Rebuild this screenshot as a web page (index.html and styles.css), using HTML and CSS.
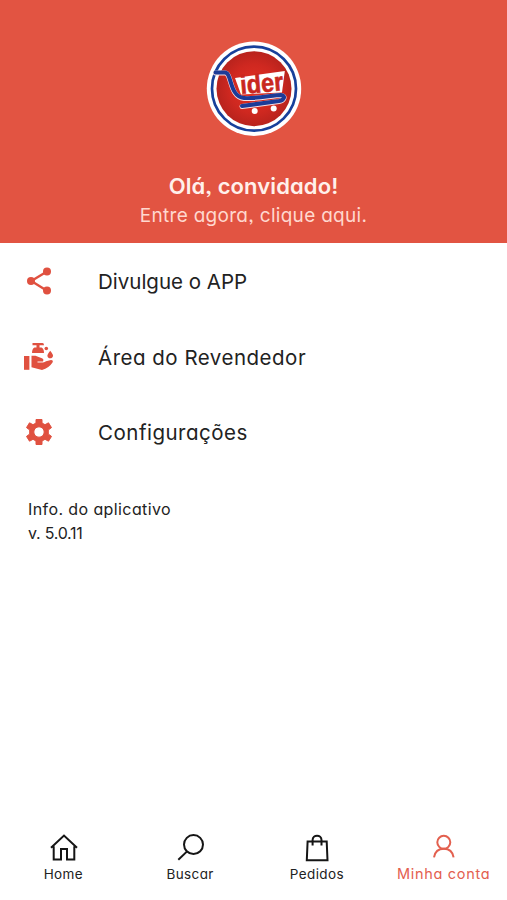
FILE: index.html
```html
<!DOCTYPE html>
<html lang="pt-BR">
<head>
  <meta charset="UTF-8">
  <meta name="viewport" content="width=device-width, initial-scale=1.0">
  <title>Minha conta</title>
  <link rel="stylesheet" href="styles.css">
</head>
<body>
  <header class="header">
    <svg class="logo" viewBox="0 0 96 96" role="img" aria-label="Lider">
      <defs>
        <radialGradient id="fundo">
          <stop offset="0" stop-color="#e33325"/>
          <stop offset="0.65" stop-color="#cf2820"/>
          <stop offset="1" stop-color="#b8231d"/>
        </radialGradient>
      </defs>
      <circle cx="48" cy="47.7" r="47.2" fill="#fff"/>
      <circle cx="48" cy="47.7" r="42" fill="#fff" stroke="#17409b" stroke-width="2.7"/>
      <circle cx="48" cy="47.7" r="37.5" fill="url(#fundo)"/>
      <path d="M29 37 L78.8 30 L76 51.5 L35 53.5 Z" fill="#fff"/>
      <text class="logo-text" x="35" y="53" textLength="43" lengthAdjust="spacingAndGlyphs" transform="rotate(-5 35 53)">ider</text>
      <g fill="none" stroke-linecap="round" stroke-linejoin="round">
        <path d="M9.5 32 H19 C26 32 23 56 38 57.5 C48 58.5 68 54.5 75 54.5 C80 55 78.5 59.5 73 60.5 L36 65.5" stroke="#f5dfe4" stroke-width="5"/>
        <path d="M9.5 31.5 H19 C26 31.5 23 55.5 38 57 C48 58 68 54 75 54 C80 54.5 78.5 59 73 60 L36 65" stroke="#1c3b98" stroke-width="4"/>
      </g>
      <circle cx="48.7" cy="70" r="3" fill="#fff"/>
      <circle cx="67.7" cy="67.5" r="3" fill="#fff"/>
    </svg>
    <h1 class="greeting">Olá, convidado!</h1>
    <a class="login" href="#">Entre agora, clique aqui.</a>
  </header>

  <main>
    <ul class="menu">
      <li>
        <svg class="menu-icon" viewBox="0 0 30 30">
          <path d="M23 5.5 L7.3 15 L23 24.7" fill="none" stroke="#e05140" stroke-width="2.4"/>
          <circle cx="23" cy="5.6" r="4" fill="#e05140"/>
          <circle cx="7" cy="15" r="4" fill="#e05140"/>
          <circle cx="23" cy="24.5" r="4" fill="#e05140"/>
        </svg>
        <span class="share">Divulgue o APP</span>
      </li>
      <li>
        <svg class="menu-icon" viewBox="0 0 30 30" fill="#e05140">
          <path d="M0 15 H5.4 V28.8 H0 Z"/>
          <path d="M7.5 14.7 H11.5 L18.5 17.5 Q20.2 18.5 19 20.5 H13.5 V21.5 H19 Q21 21.2 22 20.2 L27 19 Q29.7 19.3 28.5 21.5 Q25 27 18 29 L7.5 26.3 Z"/>
          <path d="M8.5 2 H18.5 Q20 2 20 4.3 H15.5 V6.5 H17.5 Q20 7.5 20 12 H8 Q8 7.5 10.5 6.5 H12.5 V4.3 H8.5 Z"/>
          <circle cx="22.3" cy="7.5" r="1.8"/>
          <path d="M26.2 9.8 Q29.3 13.5 29 14.9 C28.5 18.1 23.9 18.1 23.4 14.9 Q23.2 13.5 26.2 9.8 Z"/>
        </svg>
        <span class="reseller">Área do Revendedor</span>
      </li>
      <li>
        <svg class="menu-icon" viewBox="0 0 30 30">
          <path fill="#e05140" stroke="#e05140" stroke-linejoin="round" fill-rule="evenodd" d="M12 2.5 H18 V6 L21 7.7 L24.5 5.8 L27.5 10.6 L24.3 13 V17 L27.5 19.4 L24.5 24.2 L21 22.3 L18 24 V27.5 H12 V24 L9 22.3 L5.5 24.2 L2.5 19.4 L5.7 17 V13 L2.5 10.6 L5.5 5.8 L9 7.7 L12 6 Z M15 9.8 A5.2 5.2 0 1 0 15 20.2 A5.2 5.2 0 1 0 15 9.8 Z"/>
        </svg>
        <span class="settings">Configurações</span>
      </li>
    </ul>

    <div class="info">
      <p class="info-title">Info. do aplicativo</p>
      <p class="version">v. 5.0.11</p>
    </div>
  </main>

  <nav class="tabs">
    <a href="#">
      <svg viewBox="0 0 30 30">
        <path d="M3 15.8 L16 3.6 L29 15.8 M5.7 14.3 V27.5 H13 V17 H19 V27.5 H26.3 V14.3"/>
      </svg>
      <span class="tab-home">Home</span>
    </a>
    <a href="#">
      <svg viewBox="0 0 30 30">
        <circle cx="18.5" cy="12.6" r="9.5"/>
        <path d="M11.8 19.6 L3.3 27.8"/>
      </svg>
      <span class="tab-search">Buscar</span>
    </a>
    <a href="#">
      <svg viewBox="0 0 30 30">
        <path d="M5.6 9.4 H24.7 L25.5 28.3 H4.8 Z M10.6 13.6 V8 C10.6 2.2 19.5 2.2 19.5 8 V13.6"/>
      </svg>
      <span class="tab-orders">Pedidos</span>
    </a>
    <a href="#" class="active">
      <svg viewBox="0 0 30 30">
        <circle cx="14.8" cy="10.3" r="6.5"/>
        <path d="M5 25.3 C6 19.5 9.8 16.8 14.8 16.8 C19.8 16.8 23.6 19.5 24.6 25.3"/>
      </svg>
      <span class="tab-account">Minha conta</span>
    </a>
  </nav>
</body>
</html>
```
FILE: styles.css
```css
* {
  box-sizing: border-box;
}

body {
  margin: 0;
  height: 900px;
  display: flex;
  flex-direction: column;
  background: #fff;
  color: #222;
  font-family: Inter, "Open Sans", sans-serif;
  font-feature-settings: "cv11", "ss03";
}

a {
  color: inherit;
  text-decoration: none;
}

.header {
  height: 243px;
  padding-top: 41px;
  display: flex;
  flex-direction: column;
  align-items: center;
  background: #e25442;
  color: #fff0eb;
}

.logo {
  width: 96px;
  height: 96px;
}

.logo-text {
  font-family: "Liberation Sans", sans-serif;
  font-size: 26px;
  font-weight: bold;
  fill: #c9281f;
  stroke: #c9281f;
  stroke-width: 0.6;
}

.greeting {
  margin: 35px 0 0;
  font-size: 22px;
  line-height: 28px;
  font-weight: 600;
  letter-spacing: 0.1px;
}

.login {
  font-size: 19px;
  line-height: 32px;
  letter-spacing: 0.3px;
  color: #ffd8cf;
}

.menu {
  list-style: none;
  margin: 0;
  padding: 0 24px;
}

.menu li {
  height: 75.5px;
  display: flex;
  align-items: center;
  gap: 44px;
  font-size: 20.5px;
}

.menu-icon {
  width: 30px;
  height: 30px;
}

.menu span {
  padding-top: 2px;
}

.reseller,
.settings {
  letter-spacing: 0.5px;
}

.info {
  padding: 27px 28px;
  font-size: 16px;
  line-height: 24px;
}

.info p {
  margin: 0;
}

.info-title {
  letter-spacing: 0.4px;
}

.version {
  letter-spacing: -0.25px;
}

.tabs {
  margin-top: auto;
  height: 70px;
  display: grid;
  grid-template-columns: repeat(4, 1fr);
}

.tabs a {
  display: flex;
  flex-direction: column;
  align-items: center;
  font-size: 13.5px;
  line-height: 20px;
  letter-spacing: 0.4px;
  white-space: nowrap;
}

.tabs svg {
  width: 30px;
  height: 30px;
  margin: 2px 0;
  fill: none;
  stroke: #151515;
  stroke-width: 2;
}

.tabs .active {
  color: #e3604f;
  font-size: 14.5px;
  letter-spacing: 0.7px;
}

.tabs .active svg {
  stroke: #e3604f;
}
```
